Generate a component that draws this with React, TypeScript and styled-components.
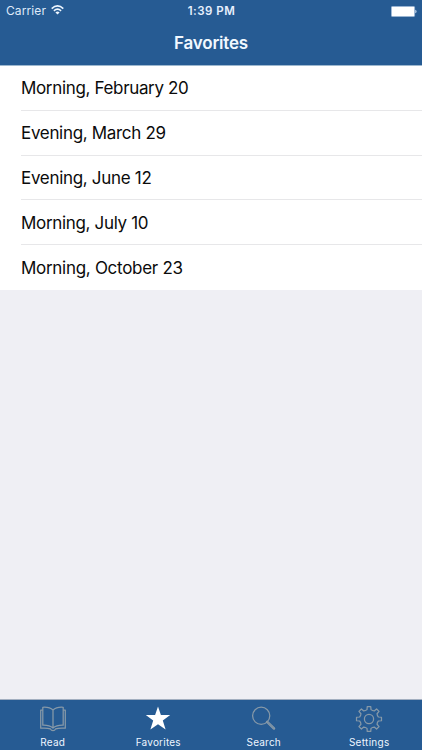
import React from "react";
import styled, { createGlobalStyle } from "styled-components";

const Global = createGlobalStyle`
  body { margin: 0; overflow: hidden; }
  * { box-sizing: border-box; }
`;

const Screen = styled.div`
  width: 422px;
  height: 750px;
  display: flex;
  flex-direction: column;
  background: #efeff4;
  color: #fff;
  font-family: Inter, "Liberation Sans", sans-serif;
`;

const Header = styled.header`
  flex: none;
  height: 66px;
  background: #265b93;
  border-bottom: 1px solid #9db8cf;
`;

const StatusBar = styled.div`
  height: 22px;
  padding: 0 5px 0 6px;
  display: grid;
  grid-template-columns: 1fr auto 1fr;
  align-items: center;
  font-size: 12px;
`;

const Carrier = styled.div`
  display: flex;
  align-items: center;
  gap: 5px;
  height: 20px;
  margin-bottom: 2px;
  color: #dfeafa;
  letter-spacing: 0.1px;
`;

const Clock = styled.div`
  font-weight: 600;
  font-size: 11.5px;
  letter-spacing: 0.5px;
  color: #e6f0fd;
`;

const BatterySlot = styled.div`
  display: flex;
  justify-content: flex-end;
`;

const Title = styled.h1`
  margin: 0;
  height: 43px;
  line-height: 43px;
  text-align: center;
  font-size: 17px;
  font-weight: 600;
  letter-spacing: -0.2px;
  color: #f1f8ff;
`;

const List = styled.ul`
  flex: none;
  list-style: none;
  margin: 0;
  padding: 0 0 0 21px;
  height: 224px;
  background: #fff;
  display: grid;
  grid-template-rows: repeat(5, 1fr);
`;

const Row = styled.li`
  display: flex;
  align-items: center;
  padding-top: 1px;
  border-bottom: 1px solid #e7e7e9;
  color: #0b0b0b;
  font-size: 17px;
  white-space: nowrap;
  &:last-child { border-bottom-color: transparent; }
`;

const RowLabel = styled.span<{ $spacing: number }>`
  letter-spacing: ${(p) => p.$spacing}px;
`;

const TabBar = styled.nav`
  flex: none;
  margin-top: auto;
  height: 51px;
  background: #265b93;
  border-top: 1px solid #a3afc0;
  display: grid;
  grid-template-columns: repeat(4, 1fr);
`;

const Tab = styled.div`
  display: flex;
  flex-direction: column;
  align-items: center;
  padding-top: 4px;
`;

const TabLabel = styled.span<{ $spacing: number }>`
  margin-top: 1px;
  font-size: 10px;
  line-height: 14px;
  font-weight: 400;
  color: #eef6ff;
  letter-spacing: ${(p) => p.$spacing}px;
`;

const Glyph = styled.svg`
  display: block;
  width: 30px;
  height: 30px;
  fill: none;
  stroke: #8799a8;
  stroke-width: 1.25;
  stroke-linejoin: round;
`;

const polar = (r: number, deg: number) => {
  const a = (deg * Math.PI) / 180;
  return `${(15 + r * Math.sin(a)).toFixed(2)} ${(15 - r * Math.cos(a)).toFixed(2)}`;
};

const gearPath =
  Array.from({ length: 8 }, (_, i) => {
    const c = i * 45;
    return `${i ? "L" : "M"}${polar(9.6, c - 12)}L${polar(12.6, c - 8)}L${polar(12.6, c + 8)}L${polar(9.6, c + 12)}Q${polar(8.8, c + 22.5)} ${polar(9.6, c + 33)}`;
  }).join("") + "Z";

const BookIcon = () => (
  <Glyph viewBox="0 0 30 30">
    <path d="M15 6Q11.5 2.8 4.8 3.3V21.2Q11.5 21 15 24Q18.5 21 25.2 21.2V3.3Q18.5 2.8 15 6V24" />
    <path d="M4.8 6H2.7V24.2Q9 23.7 12.3 24.8Q13.2 26.7 15 26.7Q16.8 26.7 17.7 24.8Q21 23.7 27.3 24.2V6H25.2" />
  </Glyph>
);

const StarIcon = () => (
  <Glyph viewBox="0 0 30 30">
    <path
      d="M15 2.4L17.9 11.1H27.2L19.8 16.6L22.6 25.6L15 20.2L7.4 25.6L10.2 16.6L2.8 11.1H12.1Z"
      fill="#fff"
      stroke="none"
    />
  </Glyph>
);

const SearchIcon = () => (
  <Glyph viewBox="0 0 30 30">
    <circle cx="12.2" cy="11.8" r="8.6" />
    <path d="M18.2 17.8L25 24.5" strokeWidth="2.5" strokeLinecap="round" />
    <path d="M18.5 18.1L24.8 24.2" stroke="#607f9d" strokeWidth="0.6" />
  </Glyph>
);

const GearIcon = () => (
  <Glyph viewBox="0 0 30 30">
    <path d={gearPath} />
    <circle cx="15" cy="15" r="4.6" />
  </Glyph>
);

const WifiIcon = () => (
  <svg width="13" height="10" viewBox="0 0 13 10" fill="none" stroke="#eef6ff" strokeWidth="1.6">
    <path d="M0.7 3.6Q6.5 -1.8 12.3 3.6" />
    <path d="M2.9 5.8Q6.5 2.5 10.1 5.8" />
    <path d="M4.4 7.4Q6.5 5.8 8.6 7.4L6.5 9.6Z" fill="#eef6ff" stroke="none" />
  </svg>
);

const BatteryIcon = () => (
  <svg width="26" height="11" viewBox="0 0 26 11">
    <rect x="0.4" y="0.4" width="23.2" height="10.2" rx="1" fill="#fff" stroke="#9cb9d9" strokeWidth="0.7" />
    <path d="M24.3 3.8Q25.5 4 25.5 5.5Q25.5 7 24.3 7.2Z" fill="#cfe0f3" />
  </svg>
);

const favorites = [
  { text: "Morning, February 20", spacing: -0.34 },
  { text: "Evening, March 29", spacing: -0.32 },
  { text: "Evening, June 12", spacing: -0.31 },
  { text: "Morning, July 10", spacing: -0.33 },
  { text: "Morning, October 23", spacing: -0.29 },
];

const tabs = [
  { text: "Read", spacing: 0.2, Icon: BookIcon },
  { text: "Favorites", spacing: 0.22, Icon: StarIcon },
  { text: "Search", spacing: 0.2, Icon: SearchIcon },
  { text: "Settings", spacing: 0.3, Icon: GearIcon },
];

export default function App() {
  return (
    <Screen>
      <Global />
      <Header>
        <StatusBar>
          <Carrier>
            Carrier
            <WifiIcon />
          </Carrier>
          <Clock>1:39 PM</Clock>
          <BatterySlot>
            <BatteryIcon />
          </BatterySlot>
        </StatusBar>
        <Title>Favorites</Title>
      </Header>
      <List>
        {favorites.map(({ text, spacing }) => (
          <Row key={text}>
            <RowLabel $spacing={spacing}>{text}</RowLabel>
          </Row>
        ))}
      </List>
      <TabBar>
        {tabs.map(({ text, spacing, Icon }) => (
          <Tab key={text}>
            <Icon />
            <TabLabel $spacing={spacing}>{text}</TabLabel>
          </Tab>
        ))}
      </TabBar>
    </Screen>
  );
}
